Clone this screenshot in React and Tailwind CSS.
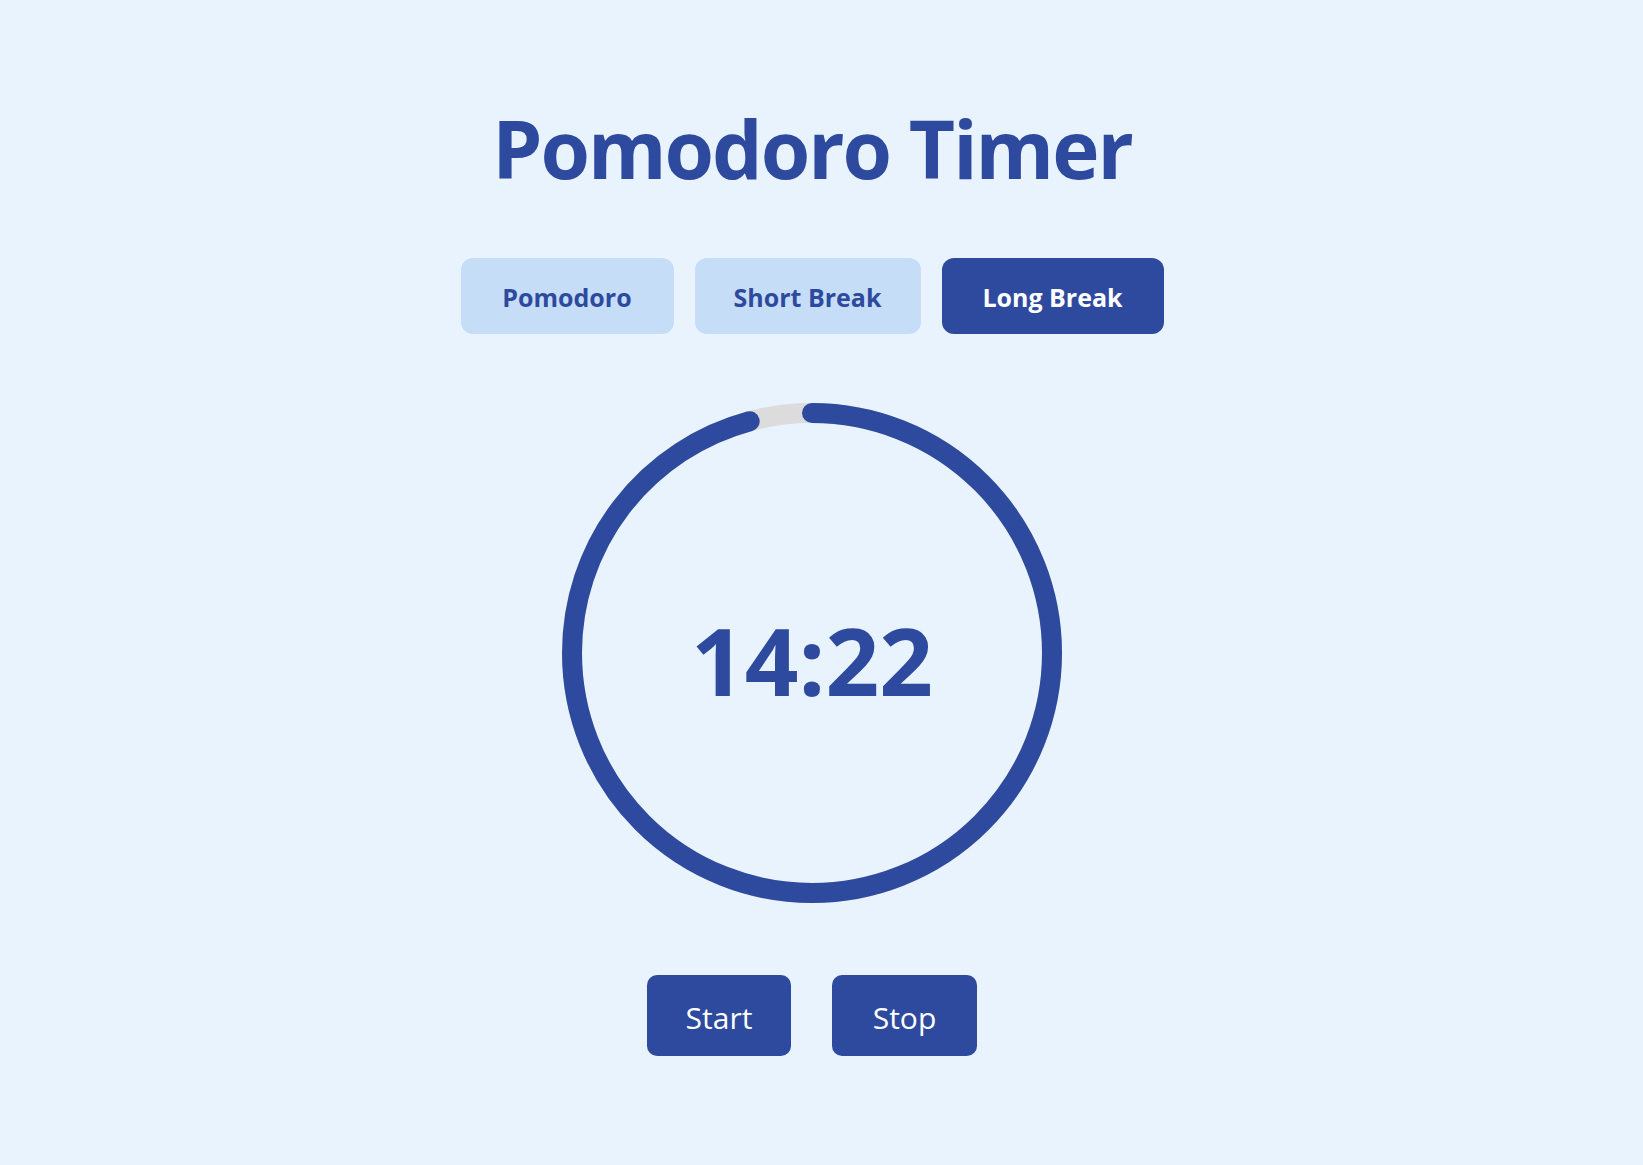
import React from "react";

const R = 240;
const C = 2 * Math.PI * R;
const progress = 862 / 900;

export default function App() {
  return (
    <div
      className="min-h-screen w-full bg-[#e8f3fd] flex flex-col items-center pr-[19px] text-[#2e4a9e]"
      style={{ fontFamily: '"Open Sans", "Noto Sans", sans-serif' }}
    >
      <h1 className="mt-[108px] h-[80px] text-[80px] leading-[80px] font-bold tracking-[-2px]">
        Pomodoro Timer
      </h1>
      <div className="mt-[70px] flex gap-[21px]">
        <button className="h-[76px] w-[213px] rounded-[12px] bg-[#c5ddf7] pt-[4px] text-[25px] font-bold text-[#2e4a9e]">
          Pomodoro
        </button>
        <button className="h-[76px] w-[226px] rounded-[12px] bg-[#c5ddf7] pt-[4px] text-[25px] font-bold text-[#2e4a9e]">
          Short Break
        </button>
        <button className="h-[76px] w-[222px] rounded-[12px] bg-[#2e4a9e] pt-[4px] text-[25px] font-bold text-white">
          Long Break
        </button>
      </div>
      <div className="relative mt-[69px] h-[500px] w-[500px]">
        <svg width="500" height="500" viewBox="0 0 500 500" className="absolute inset-0">
          <circle cx="250" cy="250" r={R} fill="none" stroke="#dcdcdc" strokeWidth="20" />
          <circle
            cx="250"
            cy="250"
            r={R}
            fill="none"
            stroke="#2e4a9e"
            strokeWidth="20"
            strokeLinecap="round"
            strokeDasharray={`${C * progress} ${C}`}
            transform="rotate(-90 250 250)"
          />
        </svg>
        <div className="absolute inset-0 flex items-center justify-center">
          <span className="text-[94px] font-bold leading-none mt-[14px]">14:22</span>
        </div>
      </div>
      <div className="mt-[72px] flex gap-[41px]">
        <button className="h-[81px] w-[144px] rounded-[10px] bg-[#2e4a9e] pt-[4px] text-[30px] text-white">
          Start
        </button>
        <button className="h-[81px] w-[145px] rounded-[10px] bg-[#2e4a9e] pt-[4px] text-[30px] text-white">
          Stop
        </button>
      </div>
    </div>
  );
}
